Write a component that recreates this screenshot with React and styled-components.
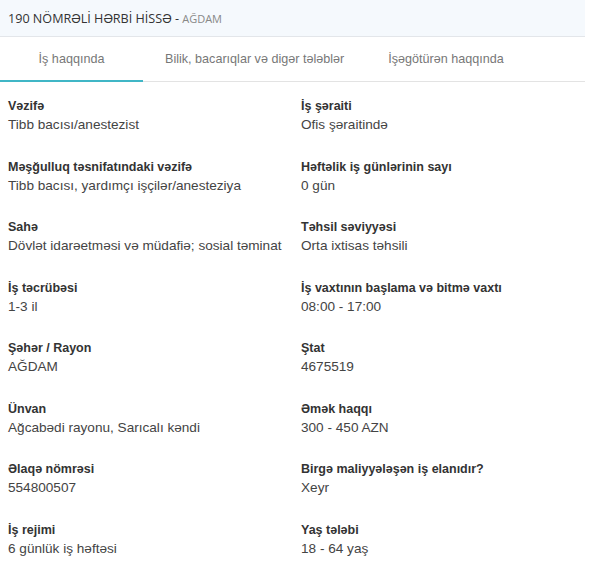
import styled, { createGlobalStyle } from "styled-components";

const GlobalStyle = createGlobalStyle`
  body {
    margin: 0;
    background: #fff;
    font-family: "Liberation Sans", Arial, sans-serif;
  }
`;

const fields = [
  ["Vəzifə", "Tibb bacısı/anestezist"],
  ["İş şəraiti", "Ofis şəraitində"],
  ["Məşğulluq təsnifatındaki vəzifə", "Tibb bacısı, yardımçı işçilər/anesteziya"],
  ["Həftəlik iş günlərinin sayı", "0 gün"],
  ["Sahə", "Dövlət idarəetməsi və müdafiə; sosial təminat"],
  ["Təhsil səviyyəsi", "Orta ixtisas təhsili"],
  ["İş təcrübəsi", "1-3 il"],
  ["İş vaxtının başlama və bitmə vaxtı", "08:00 - 17:00"],
  ["Şəhər / Rayon", "AĞDAM"],
  ["Ştat", "4675519"],
  ["Ünvan", "Ağcabədi rayonu, Sarıcalı kəndi"],
  ["Əmək haqqı", "300 - 450 AZN"],
  ["Əlaqə nömrəsi", "554800507"],
  ["Birgə maliyyələşən iş elanıdır?", "Xeyr"],
  ["İş rejimi", "6 günlük iş həftəsi"],
  ["Yaş tələbi", "18 - 64 yaş"],
];

const tabs = ["İş haqqında", "Bilik, bacarıqlar və digər tələblər", "İşəgötürən haqqında"];

export default function App() {
  return (
    <Page>
      <GlobalStyle />
      <Header>
        190 NÖMRƏLİ HƏRBİ HİSSƏ - <City>AĞDAM</City>
      </Header>
      <Tabs>
        {tabs.map((t, i) => (
          <Tab key={t} $active={i === 0}>
            {t}
          </Tab>
        ))}
      </Tabs>
      <Grid>
        {fields.map(([label, value]) => (
          <Field key={label}>
            <Label>{label}</Label>
            <Value>{value}</Value>
          </Field>
        ))}
      </Grid>
    </Page>
  );
}

const Page = styled.div`
  width: 585px;
`;

const Header = styled.div`
  height: 37px;
  box-sizing: border-box;
  padding: 0 8px;
  display: flex;
  align-items: center;
  background: #f5f9fd;
  border-bottom: 1px solid #e3e6ea;
  font-family: "Open Sans", sans-serif;
  font-size: 12.6px;
  color: #333;
  white-space: pre;
`;

const City = styled.span`
  font-size: 11px;
  color: #888;
`;

const Tabs = styled.div`
  display: flex;
  height: 44px;
  border-bottom: 1px solid #e3e3e3;
`;

const Tab = styled.div`
  display: flex;
  align-items: center;
  justify-content: center;
  box-sizing: border-box;
  min-width: ${(p) => (p.$active ? "143px" : "auto")};
  padding: 0 22px;
  font-size: 12.6px;
  color: #777;
  border-bottom: 2px solid ${(p) => (p.$active ? "#40b6c6" : "transparent")};
  margin-bottom: -1px;
`;

const Grid = styled.div`
  display: grid;
  grid-template-columns: 293px 1fr;
  padding: 16px 0 0 8px;
`;

const Field = styled.div`
  height: 60.5px;
`;

const Label = styled.div`
  font-size: 12.5px;
  font-weight: bold;
  color: #333;
  line-height: 17px;
`;

const Value = styled.div`
  font-size: 13.6px;
  color: #444;
  line-height: 19px;
`;
